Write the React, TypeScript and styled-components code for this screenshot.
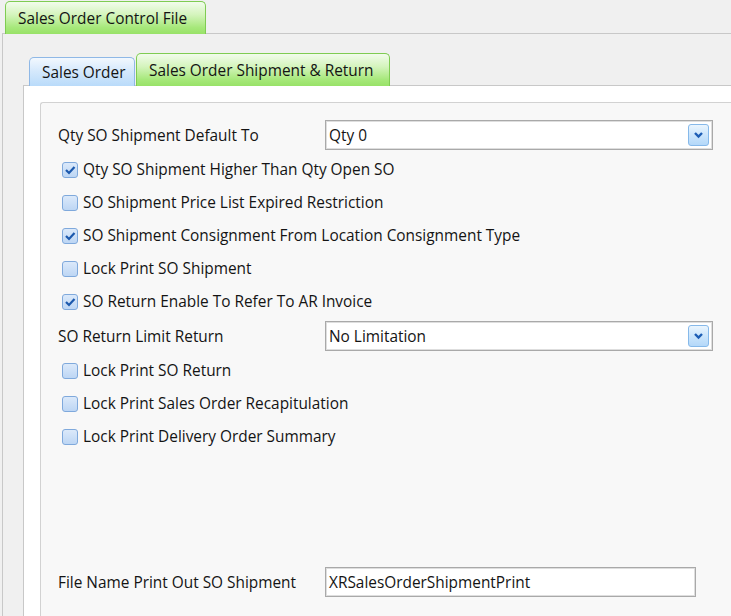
import { FC } from 'react';
import styled, { createGlobalStyle } from 'styled-components';

const GlobalStyle = createGlobalStyle`
    body {
        margin: 0;
        background: #f0f0f0;
        font-family: 'Open Sans', 'Noto Sans', sans-serif;
        color: #141414;
    }
`;

const Page = styled.div`
    width: 731px;
    height: 616px;
    overflow: hidden;
    padding-top: 1px;
    box-sizing: border-box;
    display: flex;
    flex-direction: column;
`;

const TabStrip = styled.div<{ $indent: number }>`
    display: flex;
    align-items: flex-end;
    padding-left: ${(p) => p.$indent}px;
    position: relative;
    z-index: 1;
`;

const Tab = styled.div<{ $width: number; $active?: boolean; $blue?: boolean }>`
    box-sizing: border-box;
    width: ${(p) => p.$width}px;
    height: ${(p) => (p.$active ? 33 : 29)}px;
    margin-bottom: -1px;
    margin-right: 1px;
    padding-left: 12px;
    border: 1px solid ${(p) => (p.$blue ? '#8fb8e6' : '#7fcc52')};
    border-bottom: none;
    border-radius: 5px 5px 0 0;
    background: ${(p) =>
        p.$blue
            ? 'linear-gradient(#f2f8fe, #d6e9fc 45%, #b9dbfa)'
            : 'linear-gradient(#f2fcec, #d4f4bc 40%, #a6e87a 80%, #98e268)'};
    font-size: 15.4px;
    line-height: ${(p) => (p.$active ? 33 : 29)}px;
    white-space: nowrap;
    color: #141414;
`;

const Panel = styled.div<{ $bg: string; $padTop: number; $padLeft: number; $shift?: number }>`
    flex: 1;
    display: flex;
    flex-direction: column;
    margin-left: ${(p) => p.$shift ?? 0}px;
    border-left: 1px solid #c8c8c8;
    border-top: 1px solid #c8c8c8;
    background: ${(p) => p.$bg};
    padding: ${(p) => p.$padTop}px 0 0 ${(p) => p.$padLeft}px;
`;

const GroupBox = styled.div`
    flex: 1;
    border-left: 1px solid #d2d2d2;
    border-top: 1px solid #d2d2d2;
    border-top-left-radius: 3px;
    background: #f8f8f8;
    padding: 14px 0 0 17px;
    font-size: 15.4px;
`;

const FieldRow = styled.div<{ $gap?: number }>`
    display: flex;
    align-items: center;
    height: 36px;
    margin-top: ${(p) => p.$gap ?? 0}px;
`;

const Label = styled.div`
    width: 267px;
    flex: none;
    white-space: nowrap;
`;

const Box = styled.div<{ $width: number }>`
    box-sizing: border-box;
    width: ${(p) => p.$width}px;
    height: 30px;
    display: flex;
    align-items: center;
    padding: 0 3px;
    border: 1px solid #a9a9a9;
    box-shadow: inset 0 0 0 1px #dedede;
    background: #fff;
    white-space: nowrap;
`;

const BoxText = styled.span`
    flex: 1;
`;

const DropButton = styled.div`
    width: 21px;
    height: 22px;
    box-sizing: border-box;
    border: 1px solid #86b9ea;
    border-radius: 3px;
    background: linear-gradient(#eaf5fe, #cbe5fc 50%, #b4d8f9);
    display: flex;
    align-items: center;
    justify-content: center;
`;

const CheckRow = styled.div`
    display: flex;
    align-items: center;
    gap: 5px;
    height: 33px;
    padding-left: 4px;
    white-space: nowrap;
`;

const CheckBox = styled.span`
    box-sizing: border-box;
    width: 16px;
    height: 16px;
    border: 1px solid #7fa9dc;
    border-radius: 3px;
    background: linear-gradient(#dbe9fa, #bdd6f4);
    display: flex;
    align-items: center;
    justify-content: center;
`;

const Combo: FC<{ value: string }> = ({ value }) => (
    <Box $width={388}>
        <BoxText>{value}</BoxText>
        <DropButton>
            <svg width="11" height="8" viewBox="0 0 11 8">
                <path d="M2 2 L5.5 5.5 L9 2" fill="none" stroke="#1d5db5" strokeWidth="2.4" />
            </svg>
        </DropButton>
    </Box>
);

const Check: FC<{ label: string; checked?: boolean }> = ({ label, checked }) => (
    <CheckRow>
        <CheckBox>
            {checked && (
                <svg width="12" height="12" viewBox="0 0 12 12">
                    <path d="M2 6 L5 9 L10.5 3" fill="none" stroke="#1c59ad" strokeWidth="2.2" />
                </svg>
            )}
        </CheckBox>
        {label}
    </CheckRow>
);

const App: FC = () => (
    <Page>
        <GlobalStyle />
        <TabStrip $indent={5}>
            <Tab $width={201} $active>
                Sales Order Control File
            </Tab>
        </TabStrip>
        <Panel $bg="#f0f0f0" $padTop={19} $padLeft={20} $shift={2}>
            <TabStrip $indent={6}>
                <Tab $width={106} $blue>
                    Sales Order
                </Tab>
                <Tab $width={254} $active>
                    Sales Order Shipment &amp; Return
                </Tab>
            </TabStrip>
            <Panel $bg="#fff" $padTop={16} $padLeft={16}>
                <GroupBox>
                    <FieldRow>
                        <Label>Qty SO Shipment Default To</Label>
                        <Combo value="Qty 0" />
                    </FieldRow>
                    <Check label="Qty SO Shipment Higher Than Qty Open SO" checked />
                    <Check label="SO Shipment Price List Expired Restriction" />
                    <Check label="SO Shipment Consignment From Location Consignment Type" checked />
                    <Check label="Lock Print SO Shipment" />
                    <Check label="SO Return Enable To Refer To AR Invoice" checked />
                    <FieldRow>
                        <Label>SO Return Limit Return</Label>
                        <Combo value="No Limitation" />
                    </FieldRow>
                    <Check label="Lock Print SO Return" />
                    <Check label="Lock Print Sales Order Recapitulation" />
                    <Check label="Lock Print Delivery Order Summary" />
                    <FieldRow $gap={111}>
                        <Label>File Name Print Out SO Shipment</Label>
                        <Box $width={371}>XRSalesOrderShipmentPrint</Box>
                    </FieldRow>
                </GroupBox>
            </Panel>
        </Panel>
    </Page>
);

export default App;
